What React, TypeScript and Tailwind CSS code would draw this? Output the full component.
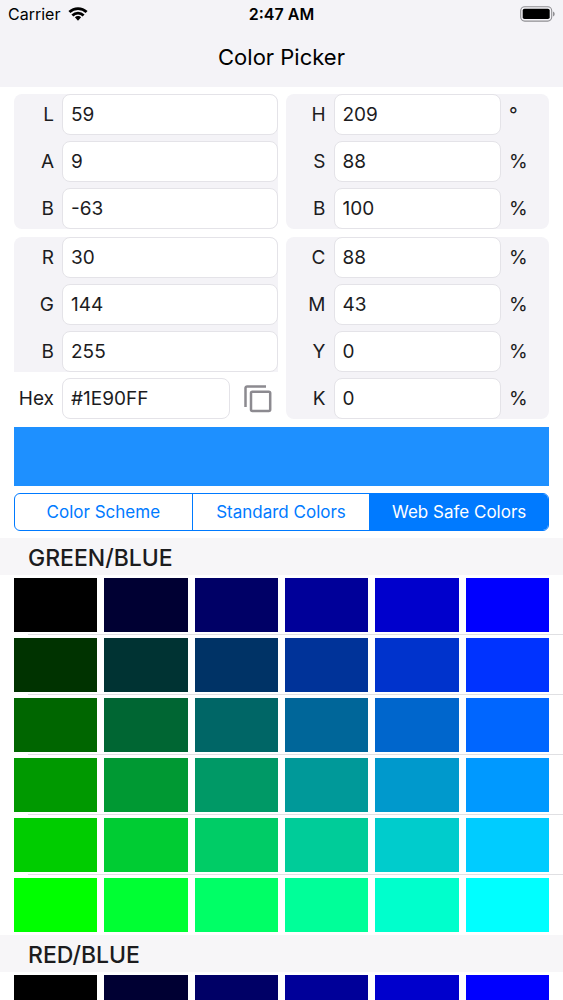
import { useId, useState } from 'react';

import clsx from 'clsx';

type Channel = {
  label: string;
  value: string;
  unit?: string;
};

const LAB: Channel[] = [
  { label: 'L', value: '59' },
  { label: 'A', value: '9' },
  { label: 'B', value: '-63' },
];

const RGB: Channel[] = [
  { label: 'R', value: '30' },
  { label: 'G', value: '144' },
  { label: 'B', value: '255' },
];

const HSB: Channel[] = [
  { label: 'H', value: '209', unit: '°' },
  { label: 'S', value: '88', unit: '%' },
  { label: 'B', value: '100', unit: '%' },
];

const CMYK: Channel[] = [
  { label: 'C', value: '88', unit: '%' },
  { label: 'M', value: '43', unit: '%' },
  { label: 'Y', value: '0', unit: '%' },
  { label: 'K', value: '0', unit: '%' },
];

const TABS = ['Color Scheme', 'Standard Colors', 'Web Safe Colors'];

const STEPS = ['00', '33', '66', '99', 'CC', 'FF'];

const SECTIONS = [
  {
    title: 'GREEN/BLUE',
    rows: STEPS.map((g) => STEPS.map((b) => `#00${g}${b}`)),
  },
  {
    title: 'RED/BLUE',
    rows: STEPS.map((r) => STEPS.map((b) => `#${r}00${b}`)),
  },
];

const WifiIcon = () => (
  <svg viewBox="0 0 20 14" className="h-3.5 w-5" aria-hidden="true">
    <g fill="none" stroke="#000" strokeWidth="2.8">
      <path d="M1.4 5.1a12.4 12.4 0 0 1 17.2 0" />
      <path d="M4.4 8.4a8 8 0 0 1 11.2 0" />
    </g>
    <path d="M10 8.9c1.2 0 2.3.5 3.1 1.3L10 13.7l-3.1-3.5A4.4 4.4 0 0 1 10 8.9z" />
  </svg>
);

const BatteryIcon = () => (
  <svg viewBox="0 0 36 16" className="h-4 w-9" aria-hidden="true">
    <rect
      x="1.7"
      y="0.7"
      width="31"
      height="14.4"
      rx="4"
      fill="none"
      stroke="#8f8f93"
      strokeWidth="1.1"
    />
    <rect x="3.7" y="2.8" width="27" height="10.2" rx="1.8" />
    <path d="M34 5.4c1.1.5 1.7 1.4 1.7 2.5s-.6 2-1.7 2.5z" fill="#8f8f93" />
  </svg>
);

const CopyIcon = () => (
  <svg
    viewBox="0 0 28 28"
    className="h-7 w-7"
    fill="none"
    stroke="#8c8a90"
    strokeWidth="2.5"
    aria-hidden="true"
  >
    <path d="M1.5 22V3a1.6 1.6 0 0 1 1.6-1.6H22" />
    <rect x="7" y="6.7" width="19.2" height="19.2" rx="1.4" />
  </svg>
);

const Field = ({
  label,
  value,
  children,
}: {
  label: string;
  value: string;
  children?: React.ReactNode;
}) => {
  const id = useId();

  return (
    <div className="flex items-center gap-2">
      <label htmlFor={id} className="w-10 shrink-0 pt-0.5 text-right">
        {label}
      </label>
      <input
        id={id}
        type="text"
        defaultValue={value}
        className="h-[41px] w-full min-w-0 flex-1 rounded-lg border border-[#e4e3e8] bg-white px-2 outline-none focus:border-[#007aff]"
      />
      {children}
    </div>
  );
};

const Panel = ({
  channels,
  className,
}: {
  channels: Channel[];
  className?: string;
}) => (
  <div className={clsx('flex flex-col gap-1.5 bg-[#f4f3f7]', className)}>
    {channels.map(({ label, value, unit }) => (
      <Field key={label} label={label} value={value}>
        {unit && <span className="w-10 shrink-0 pt-0.5">{unit}</span>}
      </Field>
    ))}
  </div>
);

export default function App() {
  const [tab, setTab] = useState('Web Safe Colors');
  const [color, setColor] = useState('#1E90FF');

  return (
    <div className="flex h-screen flex-col overflow-hidden bg-white font-['Inter','Liberation_Sans',sans-serif] text-[#1c1c1e]">
      <header className="bg-[#f4f3f7] text-black">
        <div className="grid h-7 grid-cols-3 items-center px-2 text-base">
          <div className="flex items-center gap-2">
            <span>Carrier</span>
            <WifiIcon />
          </div>
          <span className="text-center font-semibold">2:47 AM</span>
          <div className="flex justify-end">
            <BatteryIcon />
          </div>
        </div>
        <h1 className="h-[59px] text-center text-[22px] leading-[59px]">
          Color Picker
        </h1>
      </header>

      <main className="flex min-h-0 flex-1 flex-col pt-[7px]">
        <div className="grid grid-cols-2 gap-2 px-3.5 text-[19px]">
          <div className="flex flex-col gap-2">
            <Panel channels={LAB} className="rounded-lg" />
            <div className="flex flex-col gap-1.5">
              <Panel channels={RGB} className="rounded-t-lg" />
              <Field label="Hex" value="#1E90FF">
                <button
                  type="button"
                  aria-label="Copy hex value"
                  className="flex w-10 shrink-0 justify-center"
                >
                  <CopyIcon />
                </button>
              </Field>
            </div>
          </div>
          <div className="flex flex-col gap-2">
            <Panel channels={HSB} className="rounded-lg" />
            <Panel channels={CMYK} className="rounded-lg" />
          </div>
        </div>

        <div
          className="mx-3.5 mt-2 h-[59px] shrink-0"
          style={{ backgroundColor: color }}
        />

        <div className="mx-3.5 mt-[7px] grid h-[38px] shrink-0 grid-cols-3 divide-x divide-[#007aff] overflow-hidden rounded-md border border-[#007aff] text-[17px]">
          {TABS.map((name) => (
            <button
              key={name}
              type="button"
              aria-pressed={name === tab}
              onClick={() => setTab(name)}
              className={clsx(
                'pt-0.5 whitespace-nowrap',
                name === tab ? 'bg-[#007aff] text-white' : 'text-[#007aff]',
              )}
            >
              {name}
            </button>
          ))}
        </div>

        <div className="mt-[7px] min-h-0 flex-1 overflow-y-auto [scrollbar-width:none]">
          {SECTIONS.map(({ title, rows }) => (
            <section key={title}>
              <h2 className="h-[37px] bg-[#f7f6f8] px-7 text-[23px] leading-10 font-medium">
                {title}
              </h2>
              {rows.map((row, i) => (
                <div key={row[0]}>
                  <div className="grid grid-cols-6 gap-[7px] px-3.5 pt-[3px] pb-0.5">
                    {row.map((hex) => (
                      <button
                        key={hex}
                        type="button"
                        aria-label={hex}
                        onClick={() => setColor(hex)}
                        className="h-[54px]"
                        style={{ backgroundColor: hex }}
                      />
                    ))}
                  </div>
                  <div
                    className={clsx(
                      'ml-7 h-px',
                      i < rows.length - 1 && 'bg-[#e0e0e3]',
                    )}
                  />
                </div>
              ))}
            </section>
          ))}
        </div>
      </main>
    </div>
  );
}
